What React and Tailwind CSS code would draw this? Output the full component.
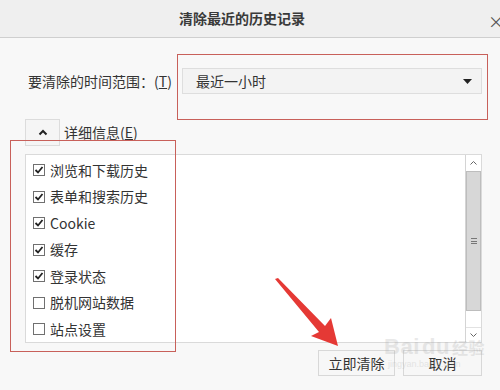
export default function App() {
  const items = [
    ["浏览和下载历史", true],
    ["表单和搜索历史", true],
    ["Cookie", true],
    ["缓存", true],
    ["登录状态", true],
    ["脱机网站数据", false],
    ["站点设置", false],
  ];
  const font = { fontFamily: '"Noto Sans CJK SC", "Noto Sans", sans-serif' };
  return (
    <div className="relative w-[500px] h-[390px] overflow-hidden bg-[#f8f8f8] text-[#333]" style={font}>
      {/* title bar */}
      <div className="relative h-[38px] bg-[#efefef] border-b border-[#cfcfcf] flex items-center justify-center">
        <span className="text-[14px] font-semibold text-[#3a3a3a] ml-[-16px]">清除最近的历史记录</span>
        <span className="absolute right-[-4px] top-[9px] text-[16px] text-[#555]">×</span>
      </div>

      {/* time range row */}
      <div className="flex items-center pt-[30px] pl-[28px]">
        <span className="text-[14px] w-[154px] whitespace-nowrap">要清除的时间范围：(<span className="underline">T</span>)</span>
        <div className="w-[300px] h-[26px] bg-[#f3f3f3] border border-[#dedede] flex items-center justify-between pl-[13px] pr-[9px]">
          <span className="text-[14px]">最近一小时</span>
          <svg width="9" height="5" viewBox="0 0 9 5"><polygon points="0,0 9,0 4.5,5" fill="#222" /></svg>
        </div>
      </div>

      {/* details toggle */}
      <div className="flex items-center mt-[25px] pl-[25px]">
        <div className="w-[35px] h-[27px] bg-[#f5f5f5] border border-[#dcdcdc] flex items-center justify-center">
          <svg width="10" height="7" viewBox="0 0 10 7"><polyline points="1.5,5.5 5,2 8.5,5.5" fill="none" stroke="#222" strokeWidth="2" /></svg>
        </div>
        <span className="text-[14px] ml-[4px]">详细信息(<span className="underline">E</span>)</span>
      </div>

      {/* list box */}
      <div className="ml-[25px] mt-[8px] w-[457px] h-[189px] bg-white border border-[#dadada] flex">
        <div className="flex-1 pt-[2px]">
          {items.map(([label, checked]) => (
            <div key={label} className="h-[26.5px] flex items-center pl-[7px]">
              <div className="w-[12px] h-[12px] border border-[#707070] bg-white flex items-center justify-center">
                {checked && (
                  <svg width="10" height="10" viewBox="0 0 10 10"><polyline points="1.5,5 4,7.5 8.5,2" fill="none" stroke="#222" strokeWidth="1.8" /></svg>
                )}
              </div>
              <span className="text-[14px] ml-[5px]">{label}</span>
            </div>
          ))}
        </div>
        <div className="w-[16px] border-l border-[#d4d4d4] flex flex-col bg-white">
          <div className="h-[16px] flex items-center justify-center">
            <svg width="7" height="4" viewBox="0 0 7 4"><polyline points="0.5,3.5 3.5,0.5 6.5,3.5" fill="none" stroke="#666" strokeWidth="1" /></svg>
          </div>
          <div className="h-[140px] bg-[#d7d7d7] border border-[#bdbdbd] flex items-center justify-center">
            <div className="flex flex-col gap-[1.5px]">
              <div className="w-[6px] h-[1px] bg-[#777]" />
              <div className="w-[6px] h-[1px] bg-[#777]" />
              <div className="w-[6px] h-[1px] bg-[#777]" />
            </div>
          </div>
          <div className="flex-1" />
          <div className="h-[15px] flex items-center justify-center border-t border-[#e2e2e2]">
            <svg width="7" height="4" viewBox="0 0 7 4"><polyline points="0.5,0.5 3.5,3.5 6.5,0.5" fill="none" stroke="#666" strokeWidth="1" /></svg>
          </div>
        </div>
      </div>

      {/* buttons */}
      <div className="flex justify-end gap-[8px] pr-[18px] mt-[7px]">
        <div className="w-[77px] h-[26px] bg-[#f7f7f7] border border-[#d8d8d8] flex items-center justify-center text-[14px]">立即清除</div>
        <div className="w-[79px] h-[26px] bg-[#f7f7f7] border border-[#d8d8d8] flex items-center justify-center text-[14px]">取消</div>
      </div>

      {/* watermark */}
      <div className="absolute left-[384px] top-[336px] pointer-events-none opacity-25 text-[#aaa] leading-none">
        <div className="text-[22px] font-bold tracking-wide" style={{ fontFamily: '"Liberation Sans", sans-serif' }}>Bai<span className="ml-[2px]">du</span><span className="text-[16px] ml-[2px]" style={font}>经验</span></div>
        <div className="text-[9px] mt-[2px] ml-[4px]" style={{ fontFamily: '"Liberation Sans", sans-serif' }}>jingyan.baidu.com</div>
      </div>

      {/* annotation boxes */}
      <div className="absolute left-[177px] top-[54px] w-[311px] h-[66px] border border-[#c8605a]" />
      <div className="absolute left-[10px] top-[140px] w-[166px] h-[212px] border border-[#c8605a]" />

      {/* red arrow */}
      <svg className="absolute left-0 top-0" width="500" height="390" viewBox="0 0 500 390">
        <polygon points="275,279 278,278 325,326 331,318 338,346 311,336 319,332" fill="#e53935" />
      </svg>
    </div>
  );
}
